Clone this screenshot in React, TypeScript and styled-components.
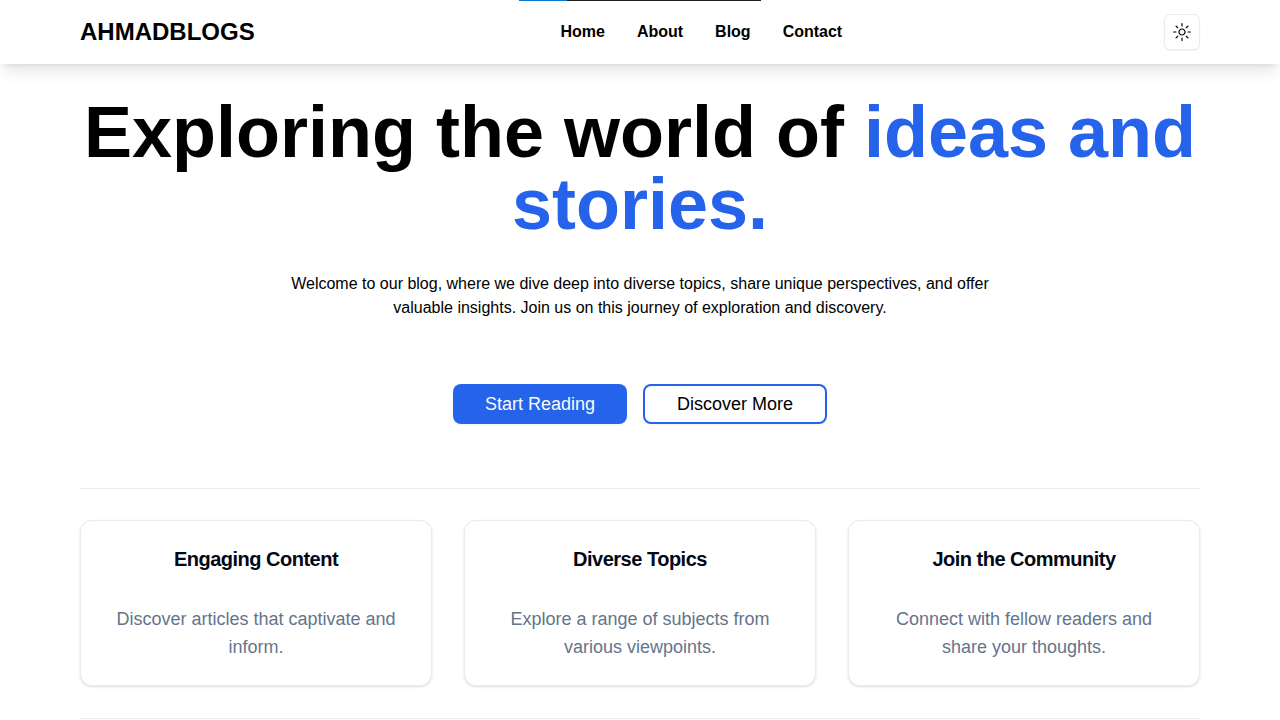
import React from "react";
import styled, { createGlobalStyle } from "styled-components";
import { RxSun } from "react-icons/rx";

const GlobalStyle = createGlobalStyle`
  *, *::before, *::after {
    box-sizing: border-box;
  }
  body {
    margin: 0;
    background: #ffffff;
    color: #000000;
    font-family: Arial, "Liberation Sans", sans-serif;
    font-size: 16px;
    line-height: 24px;
  }
  h1, h2, p {
    margin: 0;
  }
`;

const Header = styled.header`
  position: sticky;
  top: 0;
  z-index: 10;
  display: flex;
  align-items: center;
  justify-content: space-between;
  height: 64px;
  padding: 0 80px;
  background: #ffffff;
  box-shadow: 0 10px 15px -3px rgba(0, 0, 0, 0.1), 0 4px 6px -4px rgba(0, 0, 0, 0.1);
`;

const LoadingBar = styled.div`
  position: absolute;
  top: 0;
  left: 0;
  right: 0;
  display: flex;
  height: 1px;
  width: 242px;
  margin: 0 auto;
  background: #1f1f1f;
`;

const LoadingFill = styled.div`
  width: 20%;
  background: #0078d4;
`;

const Logo = styled.a`
  color: inherit;
  font-size: 24px;
  font-weight: 700;
  line-height: 32px;
  text-decoration: none;
`;

const Nav = styled.nav`
  display: flex;
  gap: 32px;
`;

const NavLink = styled.a`
  color: inherit;
  font-weight: 700;
  text-decoration: none;
`;

const Actions = styled.div`
  display: flex;
  padding-left: 16px;
`;

const ThemeButton = styled.button`
  display: flex;
  align-items: center;
  justify-content: center;
  width: 36px;
  height: 36px;
  padding: 0;
  border: 1px solid #e9ebf0;
  border-radius: 6px;
  background: #ffffff;
  color: #000000;
  box-shadow: 0 1px 2px rgba(0, 0, 0, 0.05);
  cursor: pointer;
`;

const Main = styled.main`
  padding: 32px 80px 0;
`;

const Hero = styled.section`
  display: flex;
  flex-direction: column;
  align-items: center;
  padding-bottom: 64px;
  text-align: center;
`;

const Title = styled.h1`
  font-size: 72px;
  font-weight: 700;
  line-height: 72px;
`;

const Accent = styled.span`
  color: #2563eb;
`;

const Intro = styled.p`
  max-width: 720px;
  margin-top: 32px;
`;

const ButtonRow = styled.div`
  display: flex;
  gap: 16px;
  margin-top: 64px;
`;

const Button = styled.button<{ $outline?: boolean }>`
  height: 40px;
  padding: 0 32px;
  border: ${(p) => (p.$outline ? "2px solid #2563eb" : "none")};
  border-radius: 8px;
  background: ${(p) => (p.$outline ? "#ffffff" : "#2563eb")};
  color: ${(p) => (p.$outline ? "#000000" : "#f8fafc")};
  font-family: inherit;
  font-size: 18px;
  line-height: 28px;
  box-shadow: 0 1px 2px rgba(0, 0, 0, 0.05);
  cursor: pointer;
`;

const Features = styled.section`
  display: grid;
  grid-template-columns: repeat(3, 1fr);
  gap: 32px;
  padding: 31px 0 32px;
  border-top: 1px solid #e9ebf0;
  border-bottom: 1px solid #e9ebf0;
`;

const Card = styled.article`
  padding: 24px;
  border: 1px solid #e9ebf0;
  border-radius: 12px;
  background: #ffffff;
  text-align: center;
  box-shadow: 0 1px 3px rgba(0, 0, 0, 0.1), 0 1px 2px -1px rgba(0, 0, 0, 0.1);
`;

const CardTitle = styled.h2`
  color: #020817;
  font-size: 20px;
  font-weight: 700;
  line-height: 28px;
  letter-spacing: -0.025em;
`;

const CardText = styled.p`
  margin-top: 32px;
  color: #64748b;
  font-size: 18px;
  line-height: 28px;
`;

const links = ["Home", "About", "Blog", "Contact"];

const features = [
  { title: "Engaging Content", text: "Discover articles that captivate and inform." },
  { title: "Diverse Topics", text: "Explore a range of subjects from various viewpoints." },
  { title: "Join the Community", text: "Connect with fellow readers and share your thoughts." },
];

export default function App() {
  return (
    <>
      <GlobalStyle />
      <Header>
        <LoadingBar>
          <LoadingFill />
        </LoadingBar>
        <Logo href="#">AHMADBLOGS</Logo>
        <Nav>
          {links.map((link) => (
            <NavLink key={link} href={`#${link.toLowerCase()}`}>
              {link}
            </NavLink>
          ))}
        </Nav>
        <Actions>
          <ThemeButton type="button" aria-label="Toggle theme">
            <RxSun size={18} />
          </ThemeButton>
        </Actions>
      </Header>
      <Main>
        <Hero>
          <Title>
            Exploring the world of <Accent>ideas and stories.</Accent>
          </Title>
          <Intro>
            Welcome to our blog, where we dive deep into diverse topics, share unique perspectives,
            and offer valuable insights. Join us on this journey of exploration and discovery.
          </Intro>
          <ButtonRow>
            <Button type="button">Start Reading</Button>
            <Button type="button" $outline>
              Discover More
            </Button>
          </ButtonRow>
        </Hero>
        <Features>
          {features.map((feature) => (
            <Card key={feature.title}>
              <CardTitle>{feature.title}</CardTitle>
              <CardText>{feature.text}</CardText>
            </Card>
          ))}
        </Features>
      </Main>
    </>
  );
}
